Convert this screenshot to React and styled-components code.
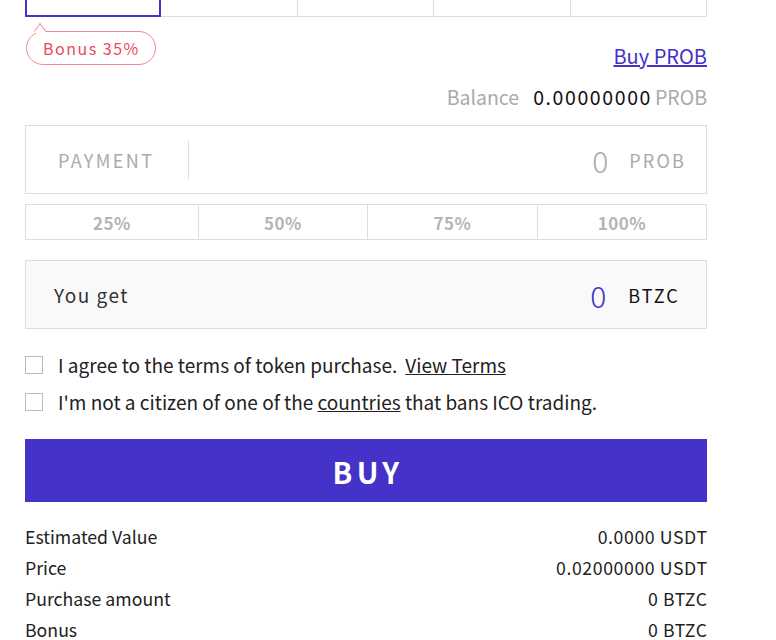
import React from "react";
import styled, { createGlobalStyle } from "styled-components";

const Global = createGlobalStyle`
  html, body { margin: 0; padding: 0; background: #fff; }
  body { font-family: "Noto Sans CJK KR", "Noto Sans", sans-serif; color: #222; }
  * { box-sizing: border-box; }
`;

const Page = styled.div`
  width: 682px;
  margin-left: 25px;
  display: flex;
  flex-direction: column;
`;

const Tabs = styled.div`
  display: grid;
  grid-template-columns: repeat(5, 1fr);
  height: 17px;
`;

const Tab = styled.div`
  border: ${(p) => (p.$active ? "2px solid #4532c9" : "1px solid #ddd")};
  border-top: none;
  border-left-width: ${(p) => (p.$active ? "2px" : "0")};
`;

const BonusRow = styled.div`
  display: flex;
  justify-content: space-between;
  align-items: flex-end;
  margin-top: 14px;
`;

const Bubble = styled.div`
  position: relative;
  margin-left: 1px;
  height: 34px;
  padding: 0 15px 0 16px;
  border: 1px solid #f28b93;
  border-radius: 17px;
  color: #eb4a57;
  font-size: 16px;
  letter-spacing: 1.5px;
  display: flex;
  align-items: center;
  &::before {
    content: "";
    position: absolute;
    top: -6px;
    left: 8px;
    width: 9px;
    height: 9px;
    background: #fff;
    border-left: 1px solid #f28b93;
    border-top: 1px solid #f28b93;
    transform: rotate(45deg) skew(8deg, 8deg);
  }
`;

const BuyLink = styled.a`
  color: #4532c9;
  font-size: 20px;
  text-decoration: underline;
  line-height: 24px;
  margin-bottom: -3px;
  cursor: pointer;
`;

const BalanceRow = styled.div`
  display: flex;
  justify-content: flex-end;
  align-items: baseline;
  margin-top: 19px;
  font-size: 19.5px;
  line-height: 26px;
`;

const Grey = styled.span`
  color: #aaa;
`;

const Value = styled.span`
  color: #111;
  margin-left: 14px;
  margin-right: 3px;
  letter-spacing: 1.6px;
`;

const InputBox = styled.div`
  margin-top: 15px;
  height: 69px;
  border: 1px solid #ddd;
  background: ${(p) => p.$bg || "#fff"};
  display: flex;
  align-items: center;
  padding: 0 20px 0 32px;
`;

const Label = styled.div`
  font-size: 18px;
  letter-spacing: 2.4px;
  color: #aaa;
  width: 131px;
  height: 38px;
  border-right: 1px solid #ddd;
  display: flex;
  align-items: center;
`;

const Spacer = styled.div`
  flex: 1;
`;

const Amount = styled.div`
  font-size: 30px;
  font-weight: 300;
  color: ${(p) => p.$color};
  margin-right: ${(p) => p.$gap || "20px"};
`;

const Unit = styled.div`
  font-size: 18px;
  letter-spacing: 2.2px;
  color: ${(p) => p.$color};
`;

const Percents = styled.div`
  margin-top: 10px;
  display: grid;
  grid-template-columns: 172px 169px 170px 1fr;
  height: 36px;
  border: 1px solid #ddd;
`;

const Pct = styled.div`
  display: flex;
  align-items: center;
  justify-content: center;
  font-size: 17px;
  font-weight: 700;
  letter-spacing: 0.5px;
  color: #b5b5b5;
  border-left: ${(p) => (p.$first ? "none" : "1px solid #ddd")};
`;

const GetBox = styled(InputBox)`
  margin-top: 20px;
  padding-left: 28px;
  padding-right: 26px;
`;

const GetLabel = styled.div`
  font-size: 19px;
  letter-spacing: 1.5px;
  color: #333;
`;

const Checks = styled.div`
  margin-top: 23px;
  display: flex;
  flex-direction: column;
  gap: 12px;
`;

const CheckRow = styled.label`
  display: flex;
  align-items: center;
  gap: 15px;
  height: 25px;
  font-size: 19px;
  line-height: 25px;
  color: #222;
`;

const Box = styled.span`
  width: 18px;
  height: 18px;
  border: 1px solid #bbb;
  background: #fff;
  flex: none;
`;

const U = styled.span`
  text-decoration: underline;
  margin-left: ${(p) => p.$ml || 0};
`;

const BuyButton = styled.button`
  margin-top: 25px;
  height: 63px;
  border: none;
  background: #4532c9;
  color: #fff;
  font-family: inherit;
  font-size: 29px;
  font-weight: 700;
  letter-spacing: 4.5px;
  padding: 0 0 0 4px;
  cursor: pointer;
`;

const Info = styled.div`
  margin-top: 18px;
  display: flex;
  flex-direction: column;
`;

const InfoRow = styled.div`
  display: flex;
  justify-content: space-between;
  height: 31px;
  align-items: center;
  font-size: 17.7px;
  color: #222;
`;

const InfoValue = styled.span`
  letter-spacing: 0.6px;
  margin-right: -0.6px;
`;

export default function App() {
  return (
    <>
      <Global />
      <Page>
        <Tabs>
          <Tab $active />
          <Tab />
          <Tab />
          <Tab />
          <Tab />
        </Tabs>
        <BonusRow>
          <Bubble>Bonus 35%</Bubble>
          <BuyLink>Buy PROB</BuyLink>
        </BonusRow>
        <BalanceRow>
          <Grey>Balance</Grey>
          <Value>0.00000000</Value>
          <Grey>PROB</Grey>
        </BalanceRow>
        <InputBox>
          <Label>PAYMENT</Label>
          <Spacer />
          <Amount $color="#aaa" $gap="21px">0</Amount>
          <Unit $color="#aaa">PROB</Unit>
        </InputBox>
        <Percents>
          <Pct $first>25%</Pct>
          <Pct>50%</Pct>
          <Pct>75%</Pct>
          <Pct>100%</Pct>
        </Percents>
        <GetBox $bg="#f9f9f9">
          <GetLabel>You get</GetLabel>
          <Spacer />
          <Amount $color="#4532c9" $gap="22px">0</Amount>
          <Unit $color="#111">BTZC</Unit>
        </GetBox>
        <Checks>
          <CheckRow>
            <Box />
            <span>
              I agree to the terms of token purchase.<U $ml="8px">View Terms</U>
            </span>
          </CheckRow>
          <CheckRow>
            <Box />
            <span>
              I'm not a citizen of one of the <U>countries</U> that bans ICO trading.
            </span>
          </CheckRow>
        </Checks>
        <BuyButton>BUY</BuyButton>
        <Info>
          <InfoRow><span>Estimated Value</span><InfoValue>0.0000 USDT</InfoValue></InfoRow>
          <InfoRow><span>Price</span><InfoValue>0.02000000 USDT</InfoValue></InfoRow>
          <InfoRow><span>Purchase amount</span><InfoValue>0 BTZC</InfoValue></InfoRow>
          <InfoRow><span>Bonus</span><InfoValue>0 BTZC</InfoValue></InfoRow>
        </Info>
      </Page>
    </>
  );
}
